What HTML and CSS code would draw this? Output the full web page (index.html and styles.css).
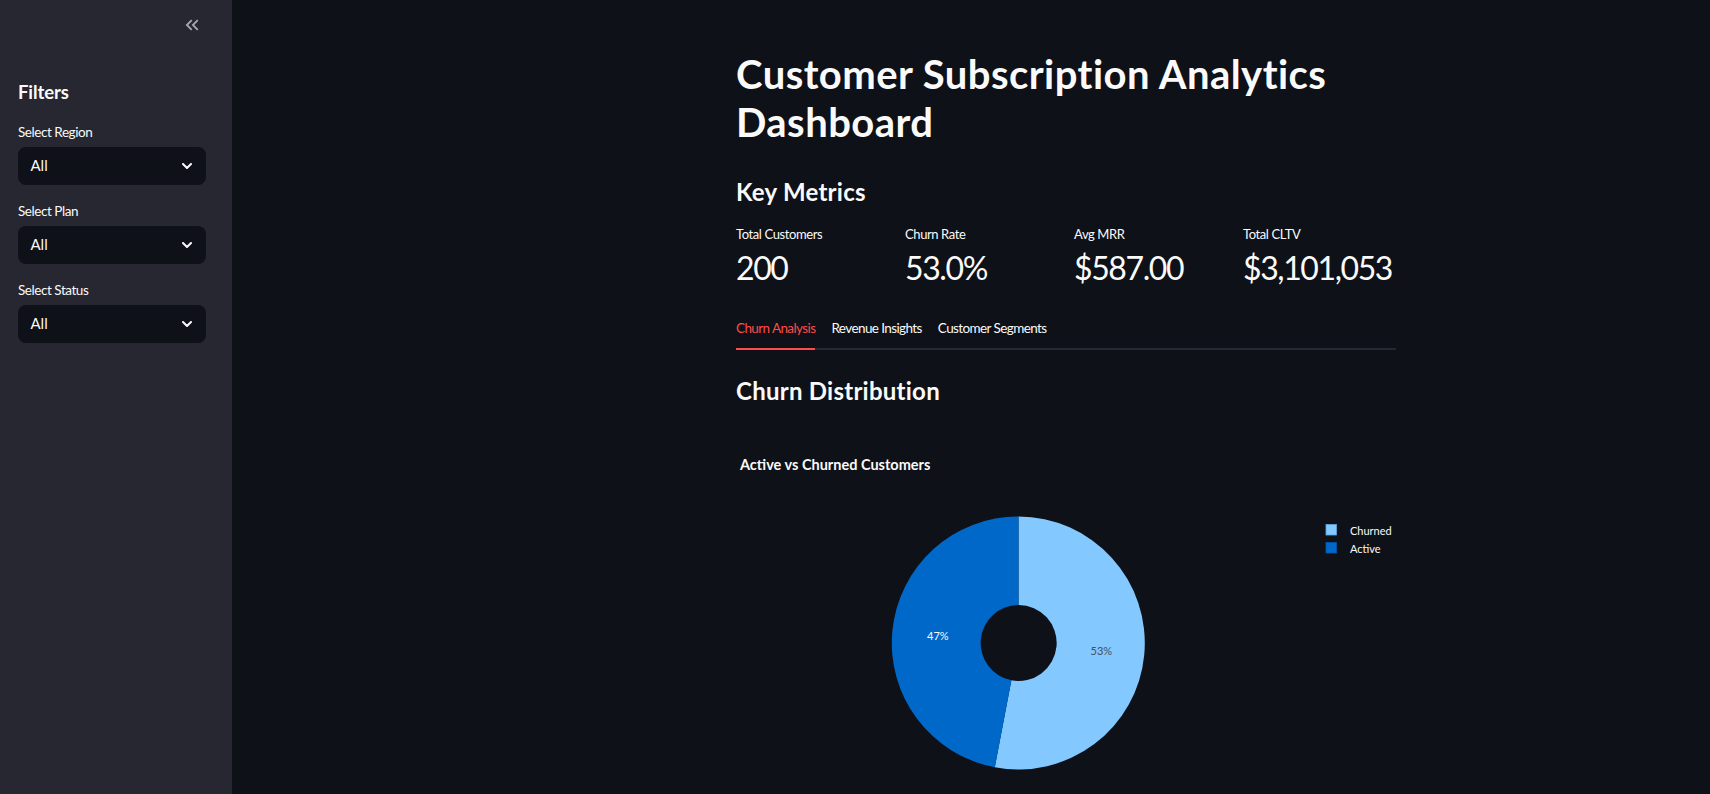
FILE: index.html
```html
<!DOCTYPE html>
<html lang="en">
<head>
<meta charset="utf-8">
<title>Customer Subscription Analytics Dashboard</title>
<link rel="stylesheet" href="styles.css">
</head>
<body>
<div class="app">
  <aside class="sidebar">
    <div class="sidebar-top">
      <button class="collapse-btn" aria-label="Collapse sidebar">
        <svg viewBox="0 0 24 24" width="22" height="22"><path fill="currentColor" d="M17.59 18L19 16.59 14.42 12 19 7.41 17.59 6l-6 6zM11 18l1.41-1.41L7.83 12l4.58-4.59L11 6l-6 6z"/></svg>
      </button>
    </div>
    <h2 class="sidebar-title">Filters</h2>
    <div class="field">
      <label class="field-label">Select Region</label>
      <div class="select"><span>All</span>
        <svg class="chev" viewBox="0 0 10 6" width="10" height="6"><polyline points="1,1 5,5 9,1" fill="none" stroke="currentColor" stroke-width="2" stroke-linecap="round" stroke-linejoin="round"/></svg>
      </div>
    </div>
    <div class="field">
      <label class="field-label">Select Plan</label>
      <div class="select"><span>All</span>
        <svg class="chev" viewBox="0 0 10 6" width="10" height="6"><polyline points="1,1 5,5 9,1" fill="none" stroke="currentColor" stroke-width="2" stroke-linecap="round" stroke-linejoin="round"/></svg>
      </div>
    </div>
    <div class="field">
      <label class="field-label">Select Status</label>
      <div class="select"><span>All</span>
        <svg class="chev" viewBox="0 0 10 6" width="10" height="6"><polyline points="1,1 5,5 9,1" fill="none" stroke="currentColor" stroke-width="2" stroke-linecap="round" stroke-linejoin="round"/></svg>
      </div>
    </div>
  </aside>

  <main class="main">
    <div class="block">
      <h1 class="title">Customer Subscription Analytics Dashboard</h1>
      <h3 class="subheader">Key Metrics</h3>
      <div class="metrics">
        <div class="metric"><div class="metric-label">Total Customers</div><div class="metric-value">200</div></div>
        <div class="metric"><div class="metric-label">Churn Rate</div><div class="metric-value">53.0%</div></div>
        <div class="metric"><div class="metric-label">Avg MRR</div><div class="metric-value">$587.00</div></div>
        <div class="metric"><div class="metric-label">Total CLTV</div><div class="metric-value">$3,101,053</div></div>
      </div>
      <div class="tabs">
        <div class="tab active">Churn Analysis</div>
        <div class="tab">Revenue Insights</div>
        <div class="tab">Customer Segments</div>
      </div>
      <h3 class="subheader section">Churn Distribution</h3>
      <div class="chart">
        <svg class="chart-svg" width="660" height="400" viewBox="0 0 660 400">
          <text class="chart-title" x="4" y="50">Active vs Churned Customers</text>
          <path fill="#83c9ff" d="M282.5 96.5 A126.5 126.5 0 1 1 258.8 347.3 L275.4 260.3 A38 38 0 1 0 282.5 185 Z"/>
          <path fill="#0068c9" d="M258.8 347.3 A126.5 126.5 0 0 1 282.5 96.5 L282.5 185 A38 38 0 0 0 275.4 260.3 Z"/>
          <text class="pie-label dark" x="354.5" y="235">53%</text>
          <text class="pie-label light" x="191" y="219.5">47%</text>
          <rect x="590" y="104.5" width="10.5" height="10.5" fill="#83c9ff" stroke="#5fa8e0" stroke-width="0.8"/>
          <rect x="590" y="122.5" width="10.5" height="10.5" fill="#0068c9" stroke="#0058ad" stroke-width="0.8"/>
          <text class="legend-text" x="614" y="115">Churned</text>
          <text class="legend-text" x="614" y="133">Active</text>
        </svg>
      </div>
    </div>
  </main>
</div>
</body>
</html>
```

FILE: styles.css
```css
* { box-sizing: border-box; }

html, body {
  margin: 0;
  padding: 0;
  height: 100%;
  overflow: hidden;
  background: #0e1117;
}

body {
  font-family: "Lato", "Source Sans Pro", sans-serif;
  color: #fafafa;
}

.app {
  display: flex;
  height: 100vh;
}

/* Sidebar */
.sidebar {
  width: 232px;
  flex: none;
  background: #262730;
  padding: 13.5px 26px 0 18px;
}

.sidebar-top {
  display: flex;
  justify-content: flex-end;
  padding-right: 3px;
  height: 22px;
}

.collapse-btn {
  background: none;
  border: 0;
  padding: 0;
  width: 22px;
  height: 22px;
  color: #a6a8b0;
  display: block;
  cursor: pointer;
}

.collapse-btn svg { display: block; }

.sidebar-title {
  margin: 42.5px 0 0;
  font-size: 18.5px;
  line-height: 28px;
  font-weight: 700;
  letter-spacing: -0.1px;
}

.field {
  display: flex;
  flex-direction: column;
  gap: 5.5px;
  margin-top: 15.5px;
}

.field-label {
  font-size: 13.5px;
  line-height: 20px;
  letter-spacing: -0.45px;
  color: #fafafa;
}

.select {
  height: 38px;
  border-radius: 8px;
  background: #0e1117;
  display: flex;
  align-items: center;
  justify-content: space-between;
  padding: 0 14px 2px 12.5px;
  font-size: 15px;
  line-height: 20px;
}

.chev {
  display: block;
  color: #fafafa;
  margin-top: 2px;
}

/* Main */
.main {
  flex: 1;
  padding: 50px 0 0 504px;
  overflow: hidden;
}

.block {
  width: 660px;
}

.title {
  margin: 0;
  font-size: 40px;
  line-height: 48px;
  font-weight: 700;
  letter-spacing: 0.45px;
}

.subheader {
  margin: 29px 0 0;
  font-size: 24px;
  line-height: 34px;
  font-weight: 700;
  letter-spacing: 0.25px;
}

.subheader.section {
  margin-top: 24px;
}

.metrics {
  display: grid;
  grid-template-columns: repeat(4, minmax(0, 1fr));
  gap: 16px;
  margin-top: 15px;
}

.metric-label {
  font-size: 13px;
  line-height: 20px;
  letter-spacing: -0.4px;
}

.metric-value {
  margin-top: 3.5px;
  font-size: 32px;
  line-height: 40px;
  letter-spacing: -1.4px;
  white-space: nowrap;
}

.tabs {
  display: flex;
  gap: 16px;
  margin-top: 30px;
  border-bottom: 2px solid #262730;
}

.tab {
  font-size: 13.5px;
  line-height: 20px;
  letter-spacing: -0.6px;
  padding-bottom: 10px;
  margin-bottom: -2px;
  border-bottom: 2px solid transparent;
  color: #fafafa;
}

.tab.active {
  color: #ff4b4b;
  border-bottom-color: #ff4b4b;
}

.chart {
  margin-top: 12.5px;
}

.chart-svg {
  display: block;
}

.chart-title {
  font-family: "Lato", sans-serif;
  font-size: 14.5px;
  font-weight: 700;
  fill: #fafafa;
}

.pie-label {
  font-family: "Lato", sans-serif;
  font-size: 11px;
}

.pie-label.dark { fill: #44505e; }
.pie-label.light { fill: #fafafa; }

.legend-text {
  font-family: "Lato", sans-serif;
  font-size: 11px;
  fill: #fafafa;
}
```
